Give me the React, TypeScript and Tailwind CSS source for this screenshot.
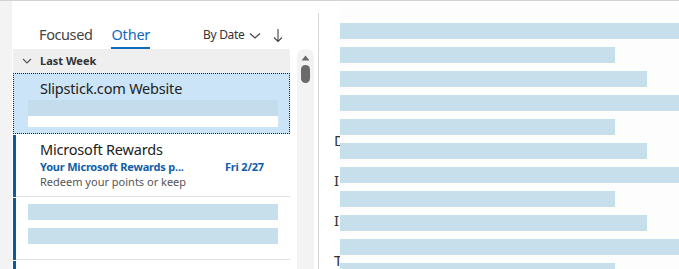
import React from "react";

const font = { fontFamily: '"Noto Sans", "Open Sans", sans-serif' };

export default function App() {
  const bars: string[] = ["w-[339px]", "w-[275px]", "w-[307px]"];
  const rows = Array.from({ length: 11 }, (_, i) => bars[i % 3]);
  return (
    <div
      className="w-[679px] h-[269px] overflow-hidden bg-white border-t border-[#d2d2d2] flex"
      style={font}
    >
      {/* left strip */}
      <div className="w-[12px] shrink-0 bg-[#f3f3f3]" />
      {/* middle column */}
      <div className="w-[306px] shrink-0 flex flex-col">
        {/* tabs row */}
        <div className="h-[48px] shrink-0 flex items-end pl-[27px] relative">
          <div className="flex items-end gap-[19px] h-full">
            <div className="h-full flex flex-col justify-end pb-[5px]">
              <span className="text-[14.5px] leading-[20px] tracking-[-0.4px] text-[#444]">Focused</span>
            </div>
            <div className="h-full flex flex-col justify-end">
              <span className="text-[14.5px] leading-[20px] tracking-[-0.2px] text-[#0f6cbd] pb-[3px]">Other</span>
              <div className="h-[2px] bg-[#0f6cbd] w-[39px]" />
            </div>
          </div>
          <div className="flex items-center absolute left-[191px] top-[25px] text-[12px] tracking-[-0.3px] text-[#333]">
            <span>By Date</span>
            <svg width="12" height="8" viewBox="0 0 12 8" className="ml-[4px] mt-[1px]">
              <path d="M1 1.5 L6 6 L11 1.5" fill="none" stroke="#444" strokeWidth="1.2" />
            </svg>
            <svg width="10" height="15" viewBox="0 0 10 15" className="ml-[12px]">
              <path d="M5 1 V13.5 M1 9.5 L5 13.5 L9 9.5" fill="none" stroke="#444" strokeWidth="1.1" />
            </svg>
          </div>
        </div>
        {/* list + scrollbar */}
        <div className="flex flex-1 min-h-0">
          <div className="w-[277px] ml-[1px] shrink-0 flex flex-col">
            {/* group header */}
            <div className="h-[24px] shrink-0 bg-[#efefef] flex items-center">
              <svg width="10" height="6" viewBox="0 0 10 6" className="ml-[9px]">
                <path d="M1 1 L5 5 L9 1" fill="none" stroke="#555" strokeWidth="1.2" />
              </svg>
              <span className="ml-[8px] text-[11px] font-bold text-[#333]">Last Week</span>
            </div>
            {/* selected item */}
            <div className="h-[61px] shrink-0 bg-[#cce4f7] border border-dotted border-[#222] flex flex-col">
              <div className="pl-[26px] text-[14.5px] leading-[20px] tracking-[-0.2px] text-[#222] pt-[4px]">
                Slipstick.com Website
              </div>
              <div className="ml-[14px] mt-[2px] w-[250px] h-[16px] bg-[#c4dceb]" />
              <div className="ml-[14px] w-[250px] h-[11px] bg-white" />
            </div>
            {/* item 2 */}
            <div className="h-[63px] shrink-0 flex">
              <div className="w-[3px] bg-[#0a5aa0] mt-[1px]" />
              <div className="flex-1 border-b border-[#e1e1e1] pl-[24px] pt-[6px] flex flex-col">
                <span className="text-[14.5px] leading-[19px] tracking-[-0.2px] text-[#222]">Microsoft Rewards</span>
                <div className="flex text-[11px] leading-[15px] font-bold tracking-[-0.2px] text-[#0f5ea8]">
                  <span className="w-[185px]">Your Microsoft Rewards p...</span>
                  <span>Fri 2/27</span>
                </div>
                <span className="text-[11px] leading-[16px] text-[#555]">Redeem your points or keep</span>
              </div>
            </div>
            {/* item 3 */}
            <div className="h-[63px] shrink-0 flex">
              <div className="w-[3px] bg-[#0a5aa0] mt-[1px]" />
              <div className="flex-1 border-b border-[#e1e1e1] pl-[12px] pt-[7px] flex flex-col">
                <div className="w-[250px] h-[16px] bg-[#c7deeb]" />
                <div className="w-[250px] h-[16px] bg-[#c7deeb] mt-[8px]" />
              </div>
            </div>
            {/* item 4 */}
            <div className="flex-1 flex">
              <div className="w-[3px] bg-[#0a5aa0] mt-[1px]" />
            </div>
          </div>
          <div className="w-[7px] shrink-0" />
          {/* scrollbar */}
          <div className="w-[17px] shrink-0 bg-[#f3f3f3] rounded-t-[8px] flex flex-col items-center pt-[6px]">
            <svg width="9" height="6" viewBox="0 0 9 6">
              <path d="M4.5 0.5 L8.5 5.5 L0.5 5.5 Z" fill="#6b6b6b" />
            </svg>
            <div className="w-[9px] h-[18px] rounded-full bg-[#6b6b6b] mt-[4px]" />
          </div>
        </div>
      </div>
      {/* divider */}
      <div className="w-[1px] shrink-0 bg-[#d6d6d6] mt-[12px]" />
      {/* reading pane */}
      <div className="flex-1 relative">
        <div className="flex flex-col pl-[15px] pt-[129px] gap-[20px] text-[15px] leading-[20px] text-[#333]">
          <span>D</span>
          <span>I</span>
          <span>I</span>
          <span>T</span>
        </div>
        <div className="absolute left-[21px] top-[0px] right-0 bottom-0 bg-[#fdfdfd] flex flex-col pt-[22px] gap-[8px]">
          {rows.map((w, i) => (
            <div key={i} className={`h-[16px] shrink-0 bg-[#c7deeb] ${w}`} />
          ))}
        </div>
      </div>
    </div>
  );
}
